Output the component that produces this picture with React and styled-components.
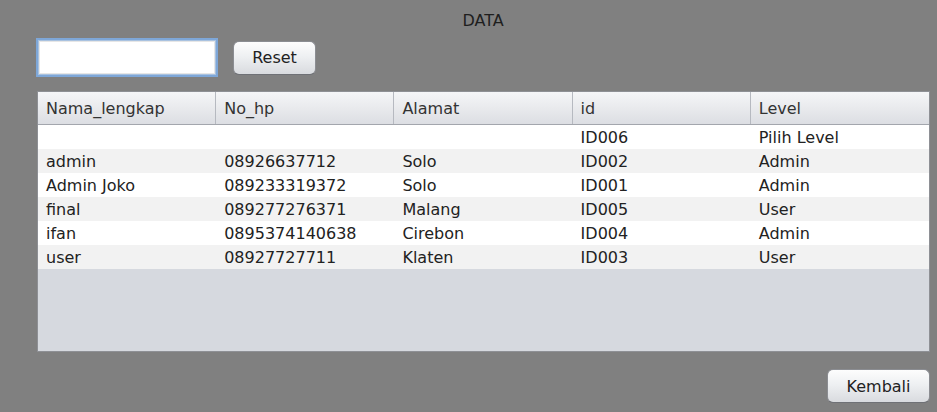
import React from 'react'
import styled, { createGlobalStyle } from 'styled-components'

const columns = ['Nama_lengkap', 'No_hp', 'Alamat', 'id', 'Level']

const rows = [
  ['', '', '', 'ID006', 'Pilih Level'],
  ['admin', '08926637712', 'Solo', 'ID002', 'Admin'],
  ['Admin Joko', '089233319372', 'Solo', 'ID001', 'Admin'],
  ['final', '089277276371', 'Malang', 'ID005', 'User'],
  ['ifan', '0895374140638', 'Cirebon', 'ID004', 'Admin'],
  ['user', '08927727711', 'Klaten', 'ID003', 'User']
]

const Global = createGlobalStyle`
  html, body {
    margin: 0;
    padding: 0;
    background: #808080;
  }
  body {
    font-family: "DejaVu Sans", "Liberation Sans", sans-serif;
    font-size: 16px;
    color: #222;
  }
`

const App = () =>
  <>
    <Global />
    <S.Frame>
      <S.Title>DATA</S.Title>
      <S.Toolbar>
        <S.Search type='text' />
        <S.Button wide={83}>Reset</S.Button>
      </S.Toolbar>
      <S.Table>
        <S.HeaderRow>
          {columns.map(c => <S.HeadCell key={c}>{c}</S.HeadCell>)}
        </S.HeaderRow>
        <S.Body>
          {rows.map((r, i) =>
            <S.Row key={i} striped={i % 2 === 1}>
              {r.map((v, j) => <S.Cell key={j}>{v}</S.Cell>)}
            </S.Row>
          )}
        </S.Body>
      </S.Table>
      <S.Footer>
        <S.Button wide={103}>Kembali</S.Button>
      </S.Footer>
    </S.Frame>
  </>

const S = {
  Frame: styled.div`
    box-sizing: border-box;
    width: 937px;
    height: 412px;
    padding: 0 7px 0 36px;
    display: flex;
    flex-direction: column;
  `,
  Title: styled.div`
    padding-top: 11px;
    height: 27px;
    line-height: 19px;
    text-align: center;
    color: #1e1e1e;
  `,
  Toolbar: styled.div`
    display: flex;
    align-items: center;
    gap: 15px;
    height: 39px;
  `,
  Search: styled.input`
    box-sizing: border-box;
    width: 182px;
    height: 39px;
    margin: 0;
    border: 2px solid #7ea7d8;
    outline: 1px solid #a9c2e0;
    outline-offset: -3px;
    background: #fff;
    box-shadow: inset 0 0 0 2px #e6e6e6;
  `,
  Button: styled.button`
    box-sizing: border-box;
    width: ${p => p.wide}px;
    height: 34px;
    padding: 0;
    font-family: inherit;
    font-size: 16px;
    color: #222;
    border: 1px solid #8b8d92;
    border-bottom-color: #6f7176;
    border-radius: 6px;
    background: linear-gradient(#fdfdfd, #eef0f2 45%, #d9dbdf);
  `,
  Table: styled.div`
    box-sizing: border-box;
    margin: 14px 0 0 1px;
    height: 261px;
    border: 1px solid #8e9095;
    background: #d6d9df;
    display: flex;
    flex-direction: column;
  `,
  HeaderRow: styled.div`
    display: grid;
    grid-template-columns: repeat(5, 1fr);
    height: 33px;
    box-sizing: border-box;
    border-bottom: 1px solid #a3a6ad;
    background: linear-gradient(#f5f6f8, #e9eaed 50%, #dcdee3);
  `,
  HeadCell: styled.div`
    display: flex;
    align-items: center;
    padding-left: 8px;
    color: #333;
    border-right: 1px solid #b6b9c0;
    &:last-child {
      border-right: none;
    }
  `,
  Body: styled.div`
    display: flex;
    flex-direction: column;
  `,
  Row: styled.div`
    display: grid;
    grid-template-columns: repeat(5, 1fr);
    height: 24px;
    background: ${p => p.striped ? '#f2f2f2' : '#fff'};
  `,
  Cell: styled.div`
    display: flex;
    align-items: center;
    padding-left: 8px;
    color: #222;
    white-space: nowrap;
  `,
  Footer: styled.div`
    display: flex;
    justify-content: flex-end;
    margin-top: 17px;
  `
}

export default App
